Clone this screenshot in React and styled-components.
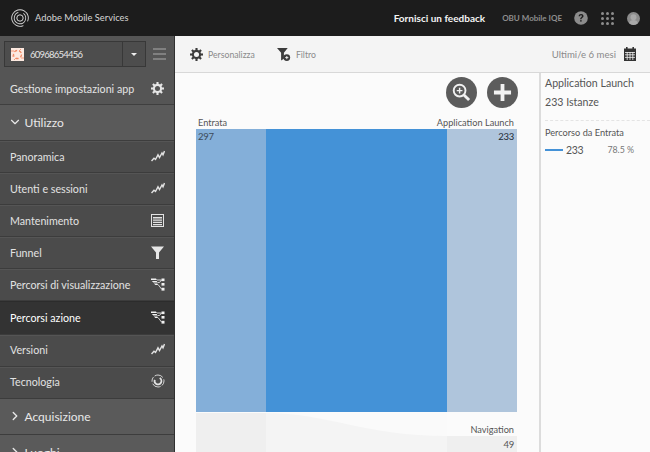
import React from "react";
import styled, { createGlobalStyle } from "styled-components";
import { ChevronDown, ChevronRight } from "lucide-react";

const FONT = `"Lato", "Noto Sans", "Liberation Sans", sans-serif`;

const GlobalStyle = createGlobalStyle`
    html, body {
        margin: 0;
        padding: 0;
        width: 650px;
        height: 452px;
        overflow: hidden;
        background: #fff;
        font-family: ${FONT};
    }
    * { box-sizing: border-box; }
`;

function LogoIcon() {
    return (
        <svg width="18" height="18" viewBox="0 0 18 18" fill="none" stroke="#d8d8d8">
            <circle cx="9" cy="9" r="8.3" strokeWidth="0.9" strokeDasharray="38 6" transform="rotate(120 9 9)" />
            <circle cx="9" cy="9" r="5.8" strokeWidth="0.9" strokeDasharray="28 5" transform="rotate(-30 9 9)" />
            <circle cx="9" cy="9" r="3.2" strokeWidth="1" />
        </svg>
    );
}

function GearIcon({ size = 13, color = "#ddd" }) {
    const teeth = [0, 45, 90, 135];
    return (
        <svg width={size} height={size} viewBox="0 0 16 16">
            {teeth.map((a) => (
                <rect key={a} x="6.7" y="0" width="2.6" height="16" fill={color} transform={`rotate(${a} 8 8)`} />
            ))}
            <circle cx="8" cy="8" r="5.7" fill={color} />
            <circle cx="8" cy="8" r="3.1" fill="var(--gear-hole, #4b4b4b)" />
        </svg>
    );
}

function TrendIcon() {
    return (
        <svg width="14" height="12" viewBox="0 0 14 12" fill="none" stroke="#e2e2e2" strokeWidth="1.4">
            <path d="M0.5 11 L3 8.2 L4.5 9.5 L7 4.8 L8.5 7.5 L11 3 L12 4.8 L13.5 1" />
        </svg>
    );
}

function TableIcon() {
    return (
        <svg width="13" height="13" viewBox="0 0 13 13">
            <rect x="0.5" y="0.5" width="12" height="12" fill="none" stroke="#e2e2e2" />
            <path d="M2 3h9v1.6H2zM2 5.6h9v1.2H2zM2 7.8h9V9H2zM2 10h9v1.2H2z" fill="#e2e2e2" />
        </svg>
    );
}

function FunnelIcon({ size = 13, color = "#e6e6e6" }) {
    return (
        <svg width={size} height={size} viewBox="0 0 13 13">
            <path d="M0 0.5h13L8 6.5V13H5V6.5z" fill={color} />
        </svg>
    );
}

function FlowIcon() {
    return (
        <svg width="14" height="13" viewBox="0 0 14 13" fill="none">
            <path d="M0 0.5h5l1 1.5H0zM0.8 3h5l.6 1.5H2.4zM2.8 5.5h3.6l.6 1.5H4.4z" fill="#f0f0f0" />
            <path d="M6 2h4.5M6.5 4.5h2l2-2.5M7 6.5l3.5 4.5" stroke="#e2e2e2" strokeWidth="0.9" />
            <rect x="10.5" y="0.5" width="3" height="2.6" fill="#f0f0f0" />
            <rect x="10.5" y="5" width="3" height="2.6" fill="#f0f0f0" />
            <rect x="10.5" y="9.8" width="3" height="2.8" fill="#f0f0f0" />
        </svg>
    );
}

function TechIcon() {
    return (
        <svg width="14" height="14" viewBox="0 0 14 14" fill="none" stroke="#e2e2e2">
            <circle cx="7" cy="7" r="6" strokeWidth="0.9" strokeDasharray="5 1.5 9 2" />
            <circle cx="7" cy="7" r="3.4" strokeWidth="1.8" strokeDasharray="15 6" transform="rotate(-60 7 7)" />
        </svg>
    );
}

function HelpIcon() {
    return (
        <svg width="14" height="14" viewBox="0 0 14 14">
            <circle cx="7" cy="7" r="6.8" fill="#8c8c8c" />
            <path d="M4.6 5.2C4.7 3.7 5.7 3 7.1 3c1.4 0 2.4.8 2.4 2 0 1-.6 1.5-1.3 2-.5.3-.7.6-.7 1.2H6.2c0-1 .3-1.5 1-2 .5-.4.8-.6.8-1.1 0-.5-.4-.8-.9-.8-.6 0-1 .4-1 1z" fill="#1c1c1c" />
            <rect x="6.2" y="9.1" width="1.4" height="1.5" fill="#1c1c1c" />
        </svg>
    );
}

function GridIcon() {
    const dots = [1.5, 6.5, 11.5];
    return (
        <svg width="13" height="13" viewBox="0 0 13 13">
            {dots.map((y) =>
                dots.map((x) => <circle key={`${x}-${y}`} cx={x} cy={y} r="1.5" fill="#8c8c8c" />)
            )}
        </svg>
    );
}

function UserIcon() {
    return (
        <svg width="13" height="13" viewBox="0 0 13 13">
            <circle cx="6.5" cy="6.5" r="6.5" fill="#8c8c8c" />
            <circle cx="6.5" cy="5.2" r="3" fill="#a8a8a8" />
            <path d="M2 11.2c.7-2.4 2.4-3.2 4.5-3.2s3.8.8 4.5 3.2A6.5 6.5 0 0 1 6.5 13 6.5 6.5 0 0 1 2 11.2z" fill="#a8a8a8" />
        </svg>
    );
}

function AppThumb() {
    return (
        <svg width="13" height="13" viewBox="0 0 13 13">
            <rect width="13" height="13" fill="#fce9e0" />
            <circle cx="6.5" cy="6.5" r="4" fill="none" stroke="#f08a64" strokeWidth="1.3" strokeDasharray="3 2" />
            <path d="M0 3h3M10 10h3M3 12l2-2M8 3l2-2M1 8h2" stroke="#f29b7c" strokeWidth="1" />
        </svg>
    );
}

function CalendarIcon() {
    return (
        <svg width="12" height="14" viewBox="0 0 12 14">
            <rect x="0" y="1.5" width="12" height="12.5" fill="#333" />
            <rect x="2" y="0" width="1.6" height="3" fill="#333" />
            <rect x="8.4" y="0" width="1.6" height="3" fill="#333" />
            <path d="M1 5h10v.8H1z" fill="#f4f4f4" />
            <path d="M3.2 5v8M6 5v8M8.8 5v8M1 7.8h10M1 10.4h10" stroke="#f4f4f4" strokeWidth="0.8" />
        </svg>
    );
}

function ZoomIcon() {
    return (
        <svg width="19" height="19" viewBox="0 0 20 20" fill="none">
            <circle cx="8" cy="8" r="6.2" stroke="#f2f2f2" strokeWidth="2" />
            <path d="M5 8h6M8 5v6" stroke="#f2f2f2" strokeWidth="1.5" />
            <path d="M12.6 12.6L18 18" stroke="#f2f2f2" strokeWidth="3" />
        </svg>
    );
}

function PlusIcon() {
    return (
        <svg width="19" height="19" viewBox="0 0 20 20">
            <path d="M8 1h4v7h7v4h-7v7H8v-7H1V8h7z" fill="#f2f2f2" />
        </svg>
    );
}

function SmallFilterIcon() {
    return (
        <svg width="14" height="15" viewBox="0 0 15 15">
            <path d="M0 0.5h11.5L7.4 5.6V12L4.4 14V5.6z" fill="#3c3c3c" />
            <circle cx="10.5" cy="10.8" r="3.6" fill="#3c3c3c" />
            <path d="M8.8 10.8h3.4M10.5 9.1v3.4" stroke="#f4f4f4" strokeWidth="1" />
        </svg>
    );
}

const NAV_ITEMS = [
    { label: "Panoramica", icon: <TrendIcon /> },
    { label: "Utenti e sessioni", icon: <TrendIcon /> },
    { label: "Mantenimento", icon: <TableIcon /> },
    { label: "Funnel", icon: <FunnelIcon /> },
    { label: "Percorsi di visualizzazione", icon: <FlowIcon /> },
    { label: "Percorsi azione", icon: <FlowIcon />, active: true },
    { label: "Versioni", icon: <TrendIcon />, lifted: true },
    { label: "Tecnologia", icon: <TechIcon />, lifted: true },
];

function SankeyChart() {
    return (
        <ChartSvg width="321" height="323" viewBox="0 0 321 323">
            <rect x="0" y="0" width="70" height="283" fill="#84afd9" />
            <rect x="70" y="0" width="181" height="283" fill="#4492d7" />
            <rect x="251" y="0" width="70" height="283" fill="#afc5dc" />
            <rect x="0" y="284" width="70" height="39" fill="#efefef" />
            <rect x="70" y="284" width="181" height="39" fill="#fafafa" />
            <path d="M70 284C130 284 170 307 251 307V323H70z" fill="#f4f4f4" />
            <rect x="251" y="307" width="70" height="16" fill="#efefef" />
            <ChartValue x="2" y="11" fill="#3c4a58">297</ChartValue>
            <ChartValue x="318" y="11" fill="#1f2a35" textAnchor="end">233</ChartValue>
            <ChartName x="318" y="304" textAnchor="end">Navigation</ChartName>
            <ChartValue x="318" y="319" fill="#555" textAnchor="end">49</ChartValue>
        </ChartSvg>
    );
}

export default function App() {
    return (
        <Page>
            <GlobalStyle />
            <TopBar>
                <Brand>
                    <LogoIcon />
                    <BrandName>Adobe Mobile Services</BrandName>
                </Brand>
                <TopActions>
                    <Feedback>Fornisci un feedback</Feedback>
                    <OrgName>OBU Mobile IQE</OrgName>
                    <HelpIcon />
                    <GridIcon />
                    <UserIcon />
                </TopActions>
            </TopBar>
            <Body>
                <Sidebar>
                    <AccountRow>
                        <AppSelect>
                            <AppLabel>
                                <AppThumb />
                                <span>60968654456</span>
                            </AppLabel>
                            <Caret>
                                <CaretShape />
                            </Caret>
                        </AppSelect>
                        <Hamburger>
                            <i />
                            <i />
                            <i />
                        </Hamburger>
                    </AccountRow>
                    <SettingsRow>
                        <span>Gestione impostazioni app</span>
                        <GearIcon size={13} color="#e6e6e6" />
                    </SettingsRow>
                    <SectionRow>
                        <ChevronDown size={14} strokeWidth={2} />
                        <span>Utilizzo</span>
                    </SectionRow>
                    {NAV_ITEMS.map((item) => (
                        <NavRow key={item.label} $active={item.active} $lifted={item.lifted}>
                            <span>{item.label}</span>
                            <NavIcon>{item.icon}</NavIcon>
                        </NavRow>
                    ))}
                    <SectionRow>
                        <ChevronRight size={14} strokeWidth={2.4} />
                        <span>Acquisizione</span>
                    </SectionRow>
                    <SectionRow>
                        <ChevronRight size={14} strokeWidth={2.4} />
                        <span>Luoghi</span>
                    </SectionRow>
                </Sidebar>
                <Main>
                    <Toolbar>
                        <ToolGroup>
                            <ToolButton>
                                <ToolGear>
                                    <GearIcon size={13} color="#3c3c3c" />
                                </ToolGear>
                                <span>Personalizza</span>
                            </ToolButton>
                            <ToolButton>
                                <SmallFilterIcon />
                                <span>Filtro</span>
                            </ToolButton>
                        </ToolGroup>
                        <DateRange>
                            <span>Ultimi/e 6 mesi</span>
                            <CalendarIcon />
                        </DateRange>
                    </Toolbar>
                    <Content>
                        <ChartPane>
                            <RoundActions>
                                <RoundButton>
                                    <ZoomIcon />
                                </RoundButton>
                                <RoundButton>
                                    <PlusIcon />
                                </RoundButton>
                            </RoundActions>
                            <ChartLabels>
                                <span>Entrata</span>
                                <span>Application Launch</span>
                            </ChartLabels>
                            <SankeyChart />
                        </ChartPane>
                        <DetailPane>
                            <DetailTitle>Application Launch</DetailTitle>
                            <DetailTitle>233 Istanze</DetailTitle>
                            <DetailDivider />
                            <DetailLabel>Percorso da Entrata</DetailLabel>
                            <DetailStat>
                                <StatLine />
                                <StatValue>233</StatValue>
                                <StatPercent>78.5 %</StatPercent>
                            </DetailStat>
                        </DetailPane>
                    </Content>
                </Main>
            </Body>
        </Page>
    );
}

const Page = styled.div`
    width: 650px;
    height: 452px;
    display: flex;
    flex-direction: column;
    overflow: hidden;
`;

const TopBar = styled.header`
    flex: 0 0 36px;
    background: #1c1c1c;
    display: flex;
    align-items: center;
    justify-content: space-between;
    padding: 0 10px 0 11px;
`;

const Brand = styled.div`
    display: flex;
    align-items: center;
    gap: 6px;
`;

const BrandName = styled.span`
    color: #d6d6d6;
    font-size: 9.3px;
    padding-bottom: 1px;
`;

const TopActions = styled.div`
    display: flex;
    align-items: center;
    gap: 13px;
`;

const Feedback = styled.span`
    color: #f4f4f4;
    font-size: 10px;
    font-weight: 700;
    margin-right: 4px;
    padding-bottom: 1px;
`;

const OrgName = styled.span`
    color: #8e8e8e;
    font-size: 8px;
    font-weight: 700;
    margin-right: -1px;
`;

const Body = styled.div`
    flex: 1;
    display: flex;
    min-height: 0;
`;

const Sidebar = styled.nav`
    flex: 0 0 175px;
    background: #4b4b4b;
    border-right: 1px solid #303030;
    color: #e8e8e8;
    overflow: hidden;
`;

const AccountRow = styled.div`
    height: 36px;
    background: #555;
    display: flex;
    align-items: center;
    padding: 0 8px 0 4px;
    gap: 7px;
`;

const AppSelect = styled.div`
    width: 142px;
    height: 26px;
    display: flex;
    border: 1px solid #383838;
    background: #4d4d4d;
`;

const AppLabel = styled.div`
    flex: 1;
    display: flex;
    align-items: center;
    gap: 6px;
    padding-left: 6px;
    font-size: 9.5px;
    letter-spacing: -0.75px;
    color: #e4e4e4;
`;

const Caret = styled.div`
    width: 23px;
    border-left: 1px solid #383838;
    display: flex;
    align-items: center;
    justify-content: center;
`;

const CaretShape = styled.div`
    width: 0;
    height: 0;
    border-left: 3.5px solid transparent;
    border-right: 3.5px solid transparent;
    border-top: 3.5px solid #eee;
`;

const Hamburger = styled.div`
    flex: 1;
    display: flex;
    flex-direction: column;
    gap: 3px;

    i {
        display: block;
        height: 2px;
        background: #808080;
    }
`;

const SettingsRow = styled.div`
    height: 33px;
    --gear-hole: #555;
    background: #555;
    border-bottom: 1px solid #3f3f3f;
    display: flex;
    align-items: center;
    justify-content: space-between;
    padding: 0 10px 0 10px;
    font-size: 10.7px;
    color: #e4e4e4;
`;

const SectionRow = styled.div`
    height: 36px;
    background: #5a5a5a;
    border-bottom: 1px solid #3d3d3d;
    display: flex;
    align-items: center;
    gap: 2.5px;
    padding: 0 0 1px 8px;
    font-size: 12px;
    color: #e8e8e8;
`;

const NavRow = styled.div`
    height: ${(p) => (p.$active ? "34px" : "32px")};
    display: flex;
    align-items: center;
    justify-content: space-between;
    padding: 0 9px ${(p) => (p.$lifted ? "4px" : "2px")} 10px;
    background: ${(p) => (p.$active ? "#333" : "#4b4b4b")};
    border-bottom: 1px solid #3c3c3c;
    border-top: 1px solid ${(p) => (p.$active ? "#2c2c2c" : "#555")};
    color: ${(p) => (p.$active ? "#fff" : "#e2e2e2")};
    font-size: 10.7px;
`;

const NavIcon = styled.div`
    width: 15px;
    display: flex;
    justify-content: center;
`;

const Main = styled.main`
    flex: 1;
    min-width: 0;
    display: flex;
    flex-direction: column;
    background: #fbfbfb;
`;

const Toolbar = styled.div`
    flex: 0 0 37px;
    background: #f4f4f4;
    border-bottom: 1px solid #d8d8d8;
    display: flex;
    align-items: center;
    justify-content: space-between;
    padding: 0 14px 0 15px;
`;

const ToolGroup = styled.div`
    display: flex;
    gap: 22px;
`;

const ToolButton = styled.div`
    display: flex;
    align-items: center;
    gap: 5px;
    font-size: 8.7px;
    color: #8a8a8a;
`;

const ToolGear = styled.div`
    --gear-hole: #f4f4f4;
    display: flex;
`;

const DateRange = styled.div`
    display: flex;
    align-items: center;
    gap: 8px;
    font-size: 9.6px;
    color: #8a8a8a;
`;

const Content = styled.div`
    flex: 1;
    display: flex;
    min-height: 0;
`;

const ChartPane = styled.section`
    flex: 0 0 364px;
    padding: 4px 0 0 21px;
    display: flex;
    flex-direction: column;
`;

const RoundActions = styled.div`
    width: 322px;
    display: flex;
    justify-content: flex-end;
    gap: 10px;
`;

const RoundButton = styled.div`
    width: 31px;
    height: 31px;
    border-radius: 50%;
    background: #5c5c5c;
    display: flex;
    align-items: center;
    justify-content: center;
`;

const ChartLabels = styled.div`
    width: 321px;
    height: 21px;
    display: flex;
    align-items: flex-end;
    justify-content: space-between;
    padding: 0 3px 1px 2px;
    font-size: 9.2px;
    color: #555;
`;

const ChartSvg = styled.svg`
    display: block;
    flex: none;
    font-family: ${FONT};
`;

const ChartValue = styled.text`
    font-size: 9.5px;
    letter-spacing: -0.3px;
`;

const ChartName = styled.text`
    font-size: 9.2px;
    fill: #555;
`;

const DetailPane = styled.aside`
    flex: 1;
    min-width: 0;
    border-left: 2px solid #dcdcdc;
    padding: 1px 0 0 4px;
`;

const DetailTitle = styled.div`
    font-size: 10.6px;
    line-height: 19px;
    color: #555;
`;

const DetailDivider = styled.div`
    border-top: 1px dashed #e4e4e4;
    margin: 8px 0 6px;
`;

const DetailLabel = styled.div`
    font-size: 9.2px;
    line-height: 12px;
    color: #555;
`;

const DetailStat = styled.div`
    display: flex;
    align-items: center;
    margin-top: 4px;
    line-height: 14px;
`;

const StatLine = styled.div`
    width: 18px;
    height: 2px;
    background: #4492d7;
`;

const StatValue = styled.span`
    margin-left: 3px;
    font-size: 10.5px;
    letter-spacing: -0.3px;
    color: #555;
`;

const StatPercent = styled.span`
    margin-left: 24px;
    font-size: 8.8px;
    color: #777;
`;
